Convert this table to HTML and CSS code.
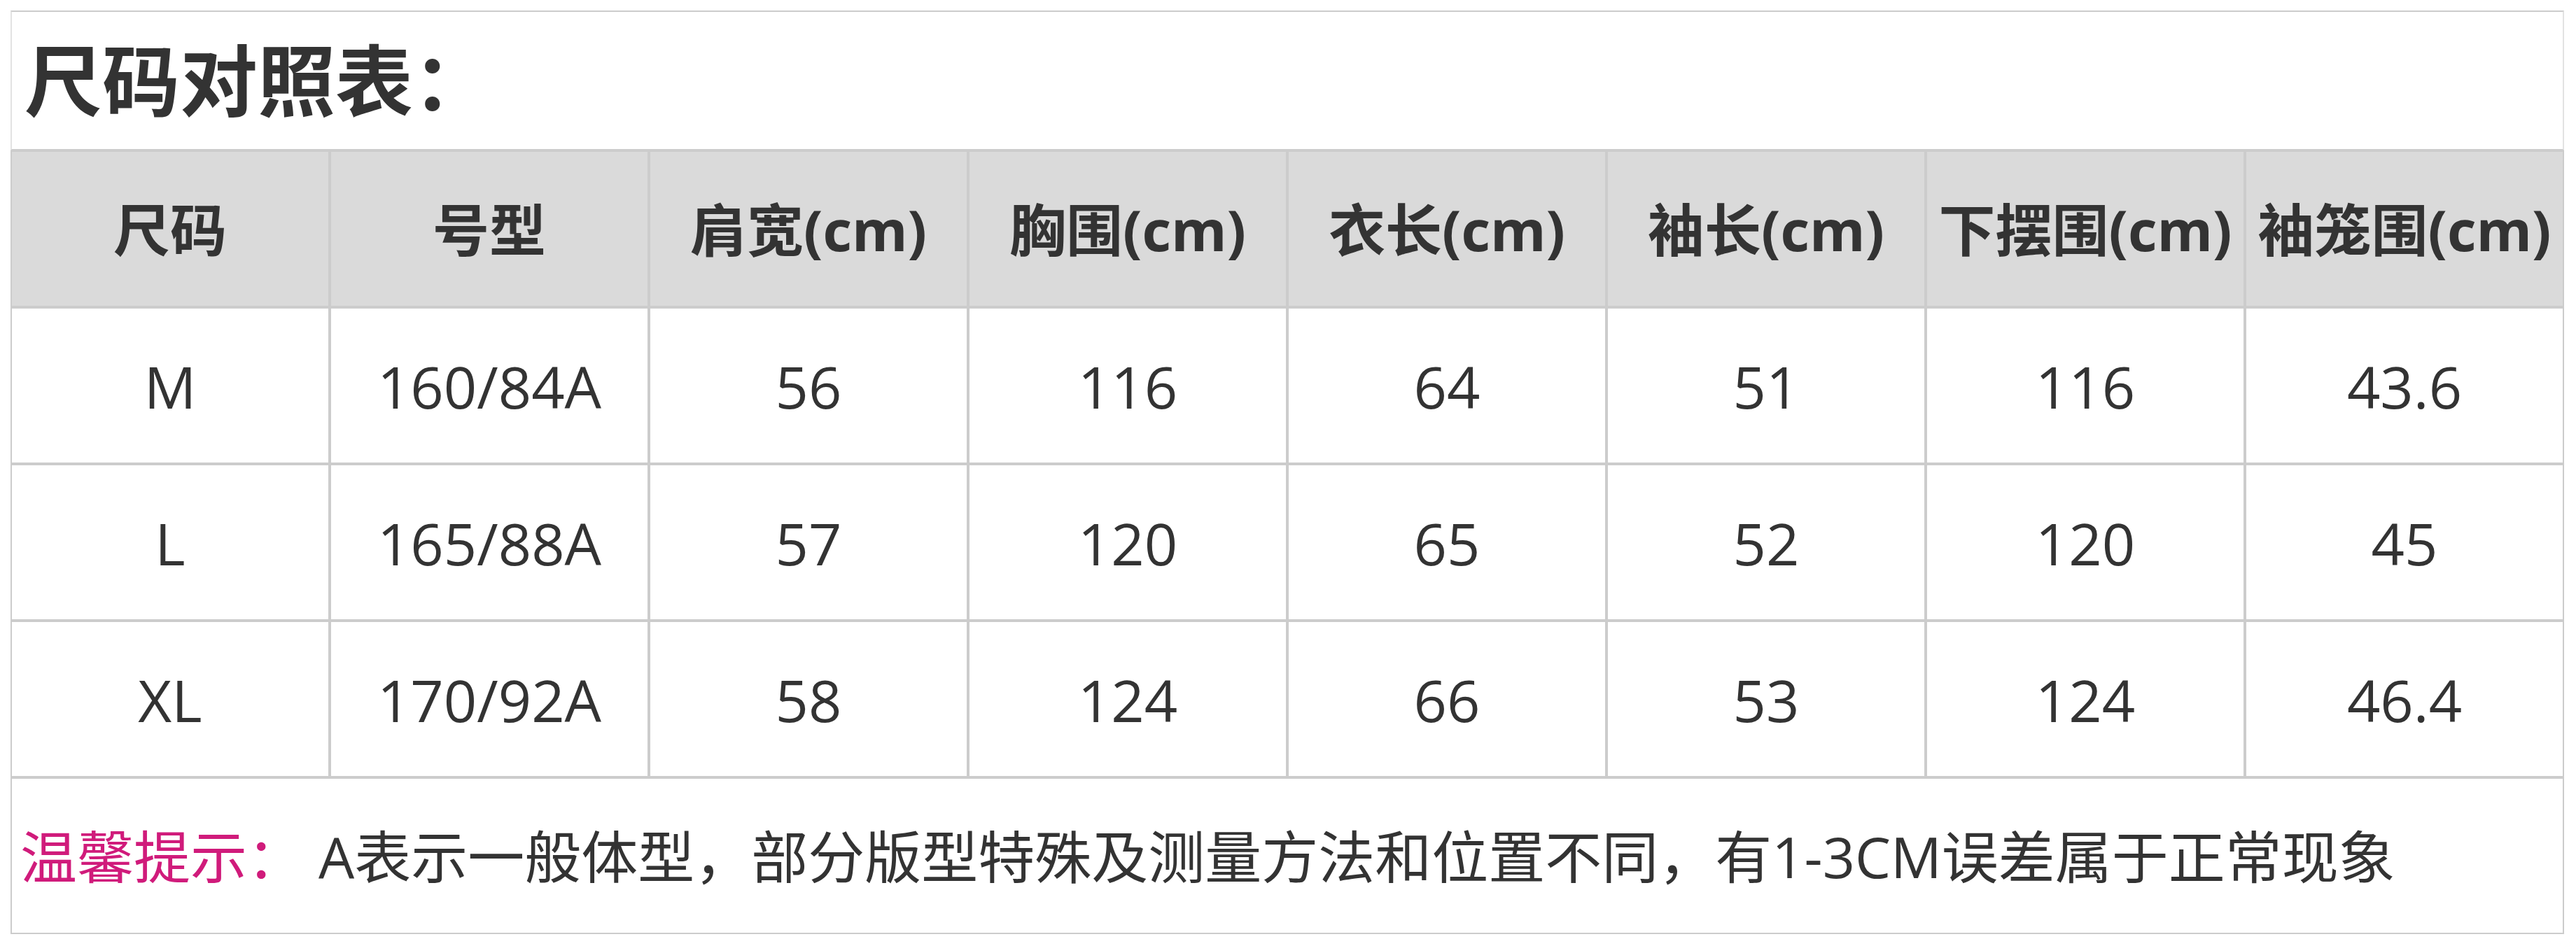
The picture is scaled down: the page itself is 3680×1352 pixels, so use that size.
FILE: index.html
```html
<!DOCTYPE html>
<html lang="zh-CN">
<head>
<meta charset="utf-8">
<title>尺码对照表</title>
<link rel="stylesheet" href="styles.css">
</head>
<body>
<div class="sheet">
  <div class="title">尺码对照表：</div>
  <div class="grid">
    <div class="cell head">尺码</div>
    <div class="cell head">号型</div>
    <div class="cell head">肩宽(cm)</div>
    <div class="cell head">胸围(cm)</div>
    <div class="cell head">衣长(cm)</div>
    <div class="cell head">袖长(cm)</div>
    <div class="cell head">下摆围(cm)</div>
    <div class="cell head">袖笼围(cm)</div>

    <div class="cell">M</div>
    <div class="cell">160/84A</div>
    <div class="cell">56</div>
    <div class="cell">116</div>
    <div class="cell">64</div>
    <div class="cell">51</div>
    <div class="cell">116</div>
    <div class="cell">43.6</div>

    <div class="cell">L</div>
    <div class="cell">165/88A</div>
    <div class="cell">57</div>
    <div class="cell">120</div>
    <div class="cell">65</div>
    <div class="cell">52</div>
    <div class="cell">120</div>
    <div class="cell">45</div>

    <div class="cell">XL</div>
    <div class="cell">170/92A</div>
    <div class="cell">58</div>
    <div class="cell">124</div>
    <div class="cell">66</div>
    <div class="cell">53</div>
    <div class="cell">124</div>
    <div class="cell">46.4</div>
  </div>
  <div class="note"><span class="note-label">温馨提示：</span>&nbsp;A表示一般体型，部分版型特殊及测量方法和位置不同，有1-3CM误差属于正常现象</div>
</div>
</body>
</html>
```
FILE: styles.css
```css
html, body {
  margin: 0;
  padding: 0;
  background: #ffffff;
}

body {
  font-family: "Open Sans", "Noto Sans CJK SC", sans-serif;
  color: #333333;
}

.sheet {
  margin: 15px 0 0 15px;
  width: 3648px;
}

.title {
  box-sizing: border-box;
  height: 200px;
  display: flex;
  align-items: center;
  padding-left: 18px;
  border-top: 2px solid #cccccc;
  border-left: 2px solid #e3e3e3;
  border-right: 2px solid #e3e3e3;
  border-bottom: 2px solid #cccccc;
  font-size: 111px;
  font-weight: 700;
  line-height: 1;
}

.grid {
  display: grid;
  grid-template-columns: repeat(8, 456px);
  grid-auto-rows: 224px;
}

.cell {
  box-sizing: border-box;
  border: 2px solid #cccccc;
  display: flex;
  align-items: center;
  justify-content: center;
  font-size: 83px;
  line-height: 1;
  white-space: nowrap;
}

.cell.head {
  background: #dadada;
  font-size: 81px;
  font-weight: 700;
}

.note {
  box-sizing: border-box;
  height: 224px;
  display: flex;
  align-items: center;
  padding-left: 12px;
  border: 2px solid #cccccc;
  font-size: 81px;
  line-height: 1;
  white-space: nowrap;
}

.note-label {
  color: #d01b7b;
}
```
